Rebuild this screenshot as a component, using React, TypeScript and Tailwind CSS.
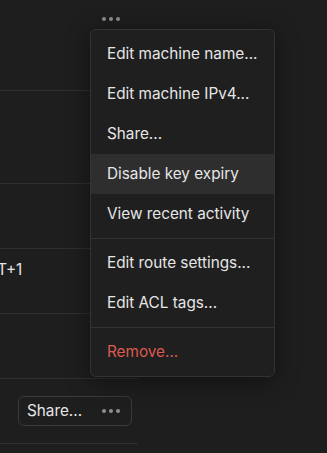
import React from "react";

const font = { fontFamily: "Inter, 'Noto Sans', sans-serif" };

function Dots() {
  return (
    <svg width="18" height="4" viewBox="0 0 18 4" className="block">
      <circle cx="2" cy="2" r="2" fill="#8f8f8f" />
      <circle cx="9" cy="2" r="2" fill="#8f8f8f" />
      <circle cx="16" cy="2" r="2" fill="#8f8f8f" />
    </svg>
  );
}

const items: { label: string; active?: boolean; danger?: boolean; sep?: boolean }[] = [
  { label: "Edit machine name..." },
  { label: "Edit machine IPv4..." },
  { label: "Share..." },
  { label: "Disable key expiry", active: true },
  { label: "View recent activity", sep: true },
  { label: "Edit route settings..." },
  { label: "Edit ACL tags...", sep: true },
  { label: "Remove...", danger: true },
];

export default function App() {
  return (
    <div className="relative w-[327px] h-[453px] overflow-hidden bg-[#1e1e1e] text-[#e6e6e6]" style={font}>
      <div className="w-[138px]">
        <div className="h-[91px] border-b border-[#2f2f2f] relative">
          <div className="absolute left-[102px] top-[17px]">
            <Dots />
          </div>
        </div>
        <div className="h-[93px] border-b border-[#2f2f2f]" />
        <div className="h-[65px] border-b border-[#2f2f2f]" />
        <div className="h-[65px] border-b border-[#2f2f2f] pt-[10px]">
          <span className="block text-[15.3px] leading-[22px] -ml-[28px]">GMT+1</span>
        </div>
        <div className="h-[65px] border-b border-[#2f2f2f]" />
        <div className="h-[65px] border-b border-[#2f2f2f] flex items-center pl-[18px]">
          <div className="h-[30px] w-[114px] rounded-md border border-[#3a3a3a] flex items-center justify-between pl-[8px] pr-[11px]">
            <span className="text-[15.3px]">Share...</span>
            <Dots />
          </div>
        </div>
      </div>

      <div className="absolute left-[90px] top-[29px] w-[185px] rounded-md border border-[#333333] bg-[#1f1f1f] py-1 shadow-[0_4px_24px_rgba(0,0,0,0.45)]">
        {items.map((it) => (
          <React.Fragment key={it.label}>
            <div
              className={
                "h-10 flex items-center px-4 text-[15.3px] whitespace-nowrap " +
                (it.active ? "bg-[#2e2e2e] " : "") +
                (it.danger ? "text-[#dc5a50]" : "text-[#e6e6e6]")
              }
            >
              {it.label}
            </div>
            {it.sep && <div className="my-1 h-px bg-[#333333]" />}
          </React.Fragment>
        ))}
      </div>
    </div>
  );
}
